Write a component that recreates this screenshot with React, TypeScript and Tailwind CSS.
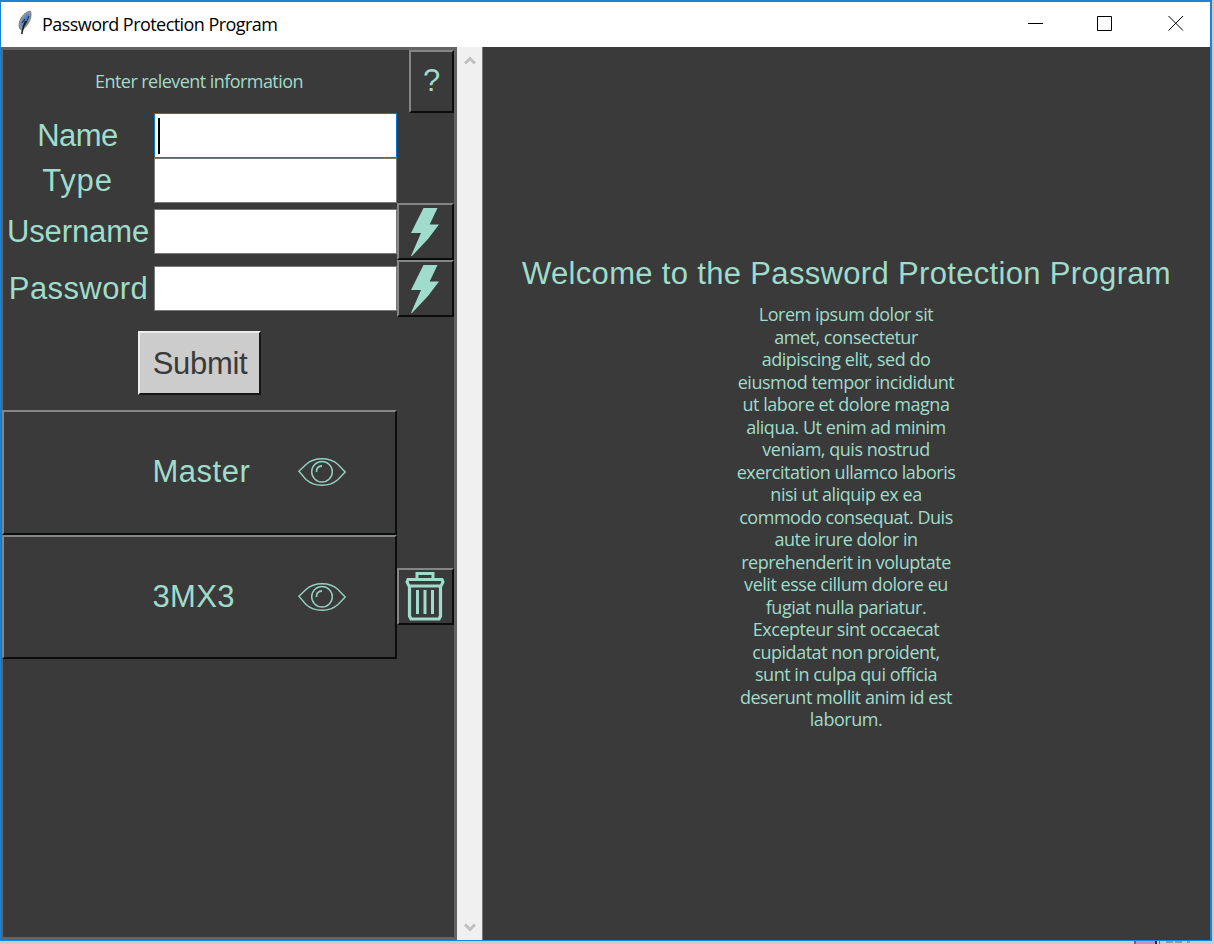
import type { ReactNode } from "react";

const RAISED =
  "border-2 border-t-[#848585] border-l-[#848585] border-r-[#0b0c0c] border-b-[#0b0c0c] bg-[#393a39] flex items-center justify-center shrink-0";

const INTRO = [
  "Lorem ipsum dolor sit",
  "amet, consectetur",
  "adipiscing elit, sed do",
  "eiusmod tempor incididunt",
  "ut labore et dolore magna",
  "aliqua. Ut enim ad minim",
  "veniam, quis nostrud",
  "exercitation ullamco laboris",
  "nisi ut aliquip ex ea",
  "commodo consequat. Duis",
  "aute irure dolor in",
  "reprehenderit in voluptate",
  "velit esse cillum dolore eu",
  "fugiat nulla pariatur.",
  "Excepteur sint occaecat",
  "cupidatat non proident,",
  "sunt in culpa qui officia",
  "deserunt mollit anim id est",
  "laborum.",
];

function Feather() {
  return (
    <svg width="16" height="26" viewBox="0 0 16 26">
      <path d="M13 1C8 2 4 7 2.500 12C1.500 16 2 19 4.500 20C9 18 14 11 14 5C14 3 14 1 13 1Z" fill="#94989c" stroke="#686a6c" strokeWidth="0.800" />
      <path d="M11 3C7 6 4.500 10 4 15L5 18C9 14 12 9 12.500 5Z" fill="#4e8bd2" />
      <path d="M5 13L8 9M9 13L12 6M7 16L10 12" stroke="#24364f" strokeWidth="1.200" />
      <path d="M8.500 11C7 15 5.500 19 4.800 24" fill="none" stroke="#16181b" strokeWidth="1.500" />
    </svg>
  );
}

function Bolt() {
  return (
    <svg width="28" height="48" viewBox="0 0 28 48" fill="#a0dccb" className="mr-[2px]">
      <path d="M12.500 0H26.500L18.700 16.500H28L17 31L1 48H0L10 25H0Z" />
    </svg>
  );
}

function Eye() {
  return (
    <svg width="48" height="28" viewBox="0 0 48 28" fill="none" stroke="#94cfbf" strokeWidth="1.450">
      <path d="M0.900 13.300L8 6.500C13 2 17 0.800 24 0.800S35 2 40 6.500L47.200 14L40 21.500C35 26 31 27.200 24 27.200S13 26 8 21.500L0.900 13.300Z" />
      <ellipse cx="24" cy="13.700" rx="10.300" ry="10.300" />
      <path d="M18.500 14C18 10.500 20.500 8 24 8" strokeWidth="1.800" />
    </svg>
  );
}

function Trash() {
  return (
    <svg width="40" height="50" viewBox="0 0 40 50" fill="none" stroke="#a0dccb" className="mr-[2px] mb-px">
      <path d="M12 8V2.500H28V8" strokeWidth="3" />
      <path d="M3 8.500H37L38 11L36 15H4L2 11Z" strokeWidth="3" />
      <path d="M4.500 16V45L6 48H34L35.500 45V16" strokeWidth="3.200" />
      <path d="M12.500 19V43M20 19V43M27.500 19V43" strokeWidth="3" />
    </svg>
  );
}

function Field({ label, tall, focused, labelClass }: { label: string; tall?: boolean; focused?: boolean; labelClass: string }) {
  return (
    <div className={tall ? "flex h-[57px] items-center" : "flex h-[45px] items-center"}>
      <div className={`w-[151px] text-center text-[31px] leading-[36px] whitespace-nowrap ${labelClass}`}>{label}</div>
      <div
        className={
          focused
            ? "flex h-[45px] w-[243px] items-center border border-[#0078d7] bg-white pl-[3px]"
            : "flex h-[45px] w-[243px] items-center border border-[#7a7a7a] bg-white pl-[3px]"
        }
      >
        {focused && <div className="h-9 w-[1.500px] bg-black" />}
      </div>
      {tall && (
        <div className={`${RAISED} h-[57px] w-[57px]`}>
          <Bolt />
        </div>
      )}
    </div>
  );
}

function Entry({ name, nameClass, children }: { name: string; nameClass: string; children?: ReactNode }) {
  return (
    <div className="-ml-px flex items-center">
      <div className="flex h-[124.500px] w-[395px] items-center border-2 border-t-[#848585] border-r-[#0b0c0c] border-b-[#0b0c0c] border-l-[#848585] pl-[148px]">
        <div className={`w-[146px] text-[31px] leading-[36px] whitespace-nowrap ${nameClass}`}>{name}</div>
        <Eye />
      </div>
      {children}
    </div>
  );
}

export default function App() {
  return (
    <div className="h-[944px] w-[1214px] overflow-hidden bg-[#cbcbcb] font-['Liberation_Sans',Arial,sans-serif] text-[#a0dccb]">
      <div className="flex h-[941px] w-[1212px] flex-col border-t-2 border-r-2 border-b border-l border-[#1883d7] bg-[#393a39]">
        <header className="flex h-[45px] shrink-0 items-center bg-white text-black">
          <div className="-mt-1 ml-4 w-[25px]">
            <Feather />
          </div>
          <div className="mb-[2px] flex-1 font-['Open_Sans',sans-serif] text-[18px] leading-6 tracking-[-0.550px]">Password Protection Program</div>
          <svg width="184" height="18" viewBox="0 0 184 18" fill="none" stroke="#000" className="mb-1">
            <path d="M2 9.500H17M71.500 2.500H85.500V16.500H71.500Z" />
            <path d="M142.500 2L157 16.500M157 2L142.500 16.500" />
          </svg>
        </header>
        <div className="flex min-h-0 flex-1">
          <aside className="flex w-[456px] shrink-0 flex-col border-t-[3px] border-r-[3px] border-b-[3px] border-l-2 border-[#626362]">
            <div className="flex h-[63px]">
              <div className="w-[406px] pr-[14px] text-center font-['Open_Sans',sans-serif] text-[18px] leading-[62px] tracking-[-0.550px]">Enter relevent information</div>
              <div className={`${RAISED} h-[63px] w-[45px] text-[31px]`}>?</div>
            </div>
            <Field label="Name" focused labelClass="tracking-[-0.500px] pr-[2px]" />
            <Field label="Type" labelClass="tracking-[0.800px] pr-[2px]" />
            <Field label="Username" tall labelClass="tracking-[-0.120px] pr-px" />
            <Field label="Password" tall labelClass="tracking-[0.400px]" />
            <div className="flex h-[93px] w-[394px] justify-center pt-[14px]">
              <div className="-ml-px flex h-[64px] w-[123px] items-center justify-center border-2 border-t-[#ededed] border-r-[#171818] border-b-[#171818] border-l-[#ededed] bg-[#cccccc] pt-[2px] pl-px text-[31px] tracking-[-0.300px] text-[#393a39]">
                Submit
              </div>
            </div>
            <Entry name="Master" nameClass="tracking-[0.500px] pl-[0.500px]" />
            <Entry name="3MX3" nameClass="tracking-[0.300px] pl-[0.500px]">
              <div className={`${RAISED} h-[57px] w-[57px]`}>
                <Trash />
              </div>
            </Entry>
          </aside>
          <div className="flex w-[26px] shrink-0 flex-col items-center justify-between border-r border-[#777] bg-[#f0f0f0] pt-2 pb-[7px]">
            <svg width="12" height="11" viewBox="0 0 12 11" fill="none" stroke="#bfbfbf" strokeWidth="3">
              <path d="M1 8.500L6 3.500L11 8.500" />
            </svg>
            <svg width="12" height="11" viewBox="0 0 12 11" fill="none" stroke="#bfbfbf" strokeWidth="3">
              <path d="M1 2.500L6 7.500L11 2.500" />
            </svg>
          </div>
          <main className="flex flex-1 flex-col items-center pt-[209px]">
            <h1 className="text-[31px] leading-[36px] tracking-[0.330px] whitespace-nowrap">Welcome to the Password Protection Program</h1>
            <div className="mt-[11px] pr-px text-center font-['Open_Sans',sans-serif] text-[18px] leading-[22.500px] tracking-[-0.470px] whitespace-nowrap">
              {INTRO.map((line) => (
                <div key={line}>{line}</div>
              ))}
            </div>
          </main>
        </div>
      </div>
      <div className="flex h-[3px] pl-[1134px]">
        <div className="w-[21px] border-l-2 border-[#78607a] bg-[#c295bd]" />
        <div className="w-[2px] bg-[#2b2330]" />
        <div className="ml-[2px] w-px bg-[#777]" />
        <div className="ml-[6px] h-[2px] w-[7px] bg-[#999]" />
        <div className="ml-[2px] h-[2px] w-[7px] bg-[#999]" />
        <div className="ml-[5px] h-[2px] w-[3px] bg-[#999]" />
      </div>
    </div>
  );
}
